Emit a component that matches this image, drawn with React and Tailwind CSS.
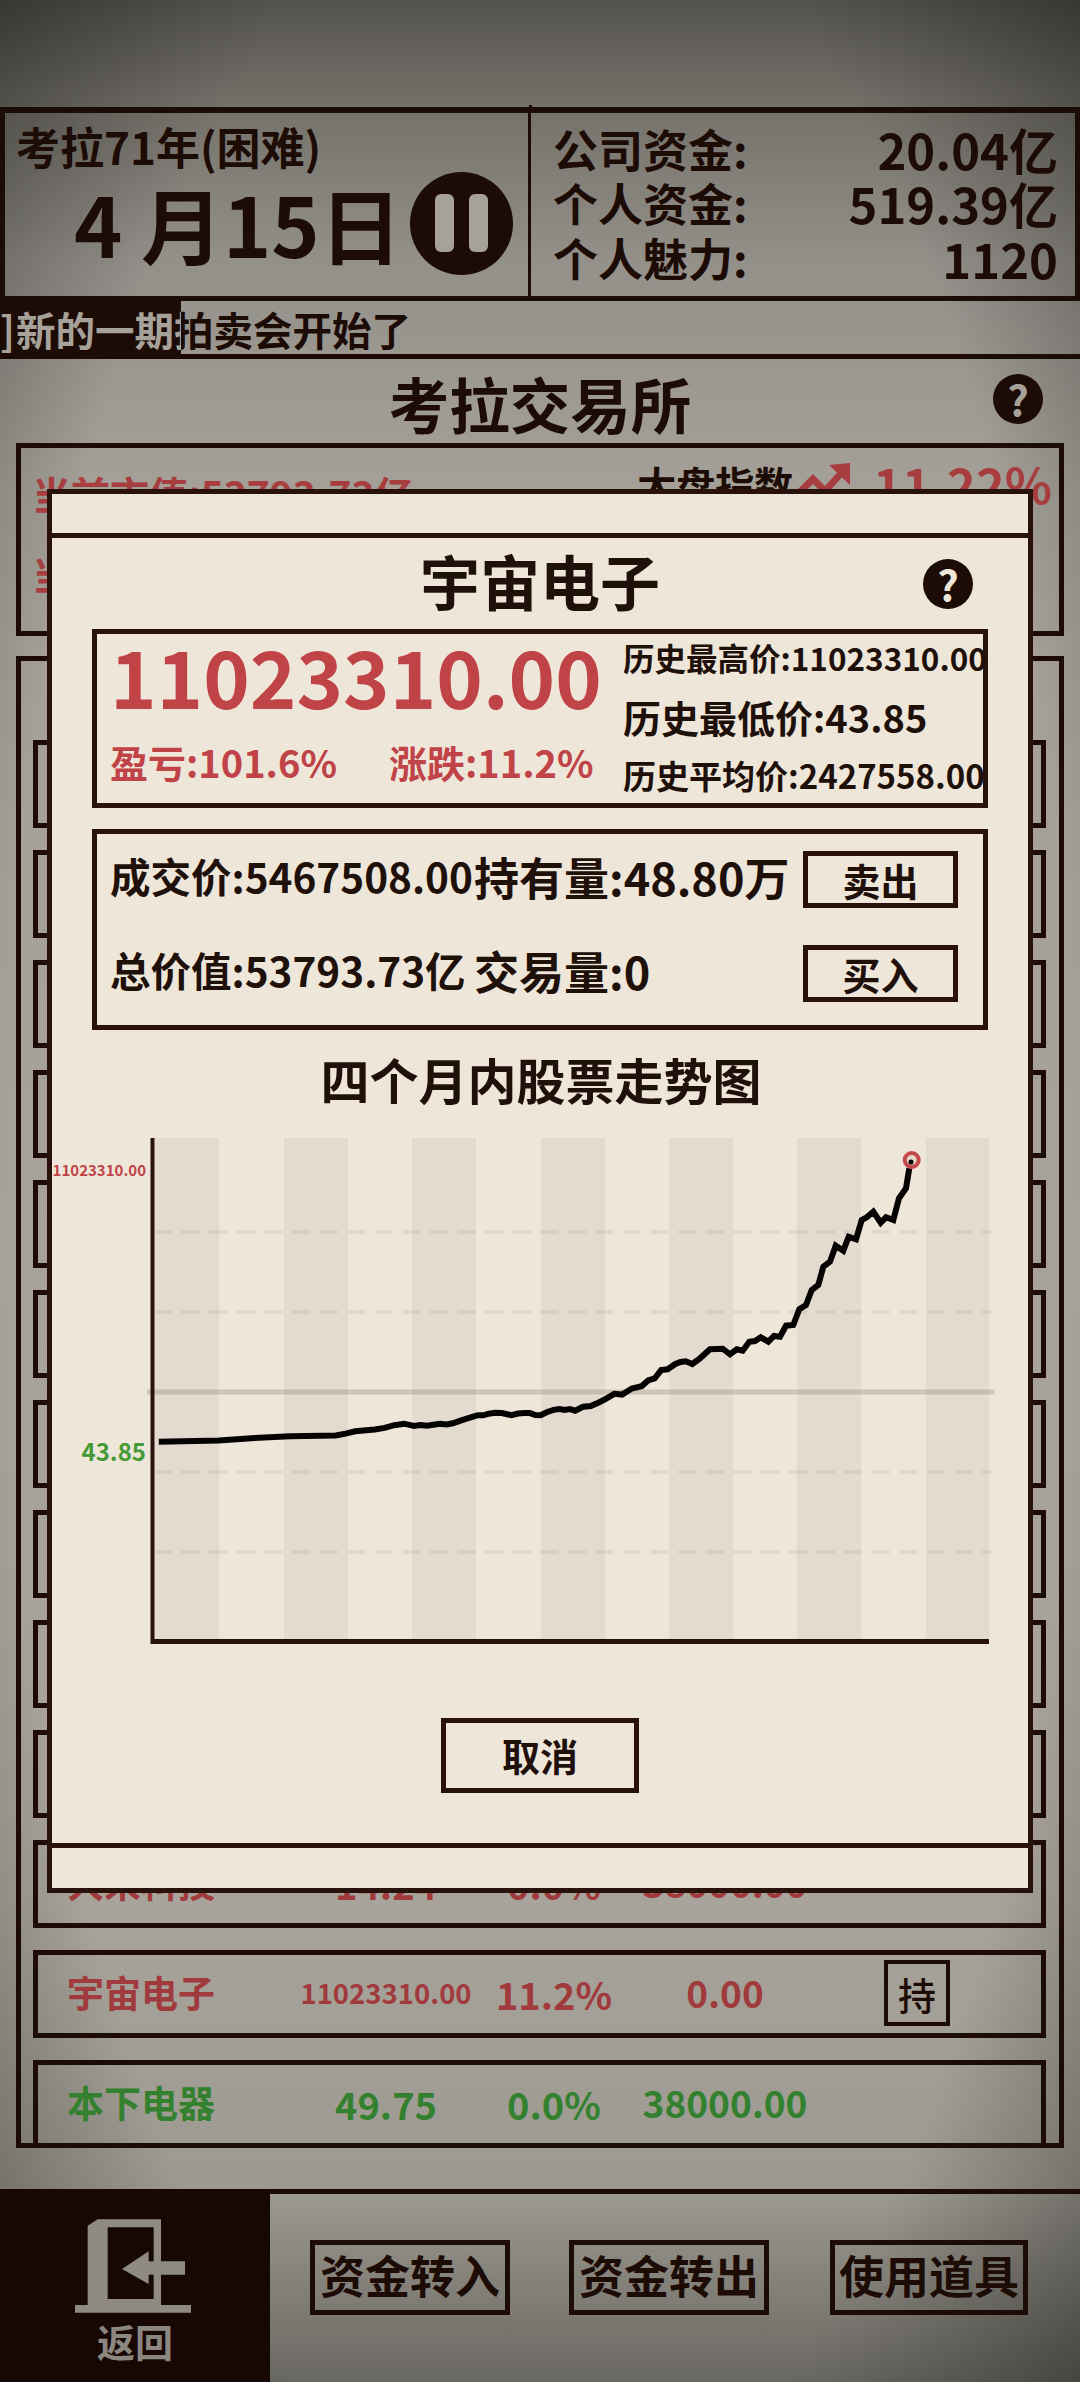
const early = [[198,945],[290,942],[340,936],[400,931],[470,929],[485,924],[500,918],[530,913],[545,909],[560,902],[575,898],[590,904],[620,901],[650,897],[665,888],[680,880],[705,872],[725,870],[740,876],[760,870],[785,876],[805,862],[830,860],[838,864],[850,854],[862,852],[875,842],[885,833],[898,820],[910,822],[925,806],[940,800],[950,785],[960,780],[970,758],[980,756],[992,742],[1008,735],[1018,742]]
const late = [[0,715],[30,688],[68,686],[90,703],[110,688],[128,692],[148,665],[165,663],[182,652],[205,665],[222,648],[240,650],[258,617],[280,615],[298,568],[318,555],[335,510],[355,495],[370,440],[390,425],[407,377],[430,392],[446,350],[468,358],[485,300],[500,292],[520,275],[542,308],[558,292],[580,300],[597,235],[618,205],[628,145]]

// past the flat start the line is a run of tiny steps, so split it and wiggle it a little
const earlyPage = early.map(([x, y]) => [30 + x / 1.537, 1080 + y / 2.613])
const roughEarly = []
earlyPage.forEach(([x, y], i) => {
  const next = earlyPage[i + 1]
  roughEarly.push([x, y])
  if (!next || x < 400) return
  const steps = Math.floor((next[0] - x) / 5)
  for (let s = 1; s < steps; s++) {
    const t = s / steps
    const wiggle = s % 2 === 0 ? 0.6 : -0.6
    roughEarly.push([x + (next[0] - x) * t, y + (next[1] - y) * t + wiggle])
  }
})

const linePoints = [
  ...roughEarly,
  ...late.map(([x, y]) => [700 + x / 3, 1120 + y / 3]),
].map(([x, y]) => `${x.toFixed(1)},${y.toFixed(1)}`).join(' ')

const stripes = [155, 284, 412, 541, 669, 797, 926]
const gridLines = [1232, 1312, 1472, 1552]

const hiddenRows = [740, 850, 960, 1070, 1180, 1290, 1400, 1510, 1620, 1730]

function Help({ mark }) {
  return (
    <div className={`flex h-[50px] w-[50px] items-center justify-center rounded-full bg-[#1d0b05] pb-[2px] text-[42px] leading-none font-bold ${mark}`}>?</div>
  )
}

function StockRow({ name, price, priceSize, change, value, color, held }) {
  return (
    <div className={`flex h-[88px] shrink-0 items-center border-[5px] border-[#1d0b05] pb-[2px] pl-[29px] font-bold ${color}`}>
      <div className="w-[223px] text-[37px] whitespace-nowrap">{name}</div>
      <div className={`w-[192px] text-center whitespace-nowrap ${priceSize}`}>{price}</div>
      <div className="w-[144px] text-center text-[38px]">{change}</div>
      <div className="w-[198px] text-center text-[37px]">{value}</div>
      {held && (
        <div className="ml-[60px] flex h-[66px] w-[66px] items-center justify-center border-[4px] border-[#1d0b05] text-[38px] font-medium text-[#1d0b05]">持</div>
      )}
    </div>
  )
}

function Chart() {
  return (
    <svg width="976" height="520" viewBox="52 1130 976 520" className="block shrink-0">
      {stripes.map((x) => (
        <rect key={x} x={x} y="1138" width={x === 926 ? 63 : 64} height="501" fill="#e4dbd0" />
      ))}
      {gridLines.map((y) => (
        <line key={y} x1="154" x2="992" y1={y} y2={y} stroke="#6f6a5a" strokeOpacity="0.11" strokeWidth="4" strokeDasharray="18 9.6" />
      ))}
      <line x1="147" x2="994" y1="1392" y2="1392" stroke="#7a6a5a" strokeOpacity="0.28" strokeWidth="5" />
      <line x1="152.5" x2="152.5" y1="1138" y2="1644" stroke="#2a120c" strokeWidth="4" />
      <line x1="151" x2="989" y1="1641.5" y2="1641.5" stroke="#2a120c" strokeWidth="5" />
      <polyline points={linePoints} fill="none" stroke="#050302" strokeWidth="6" strokeLinejoin="miter" />
      <circle cx="911.7" cy="1160" r="7" fill="#e6d4c8" stroke="#c4474a" strokeWidth="4" />
      <circle cx="911" cy="1162" r="2.5" fill="#050302" />
      <text x="146" y="1176" textAnchor="end" fontSize="15" fontWeight="700" fill="#c04347">11023310.00</text>
      <text x="146" y="1461" textAnchor="end" fontSize="24" fontWeight="700" fill="#459a37">43.85</text>
    </svg>
  )
}

function Modal() {
  return (
    <div className="absolute top-[489px] left-[47px] flex h-[1404px] w-[986px] flex-col border-[5px] border-[#2a120c] bg-[#efe6da] text-[#20100a]">
      <div className="h-[44px] shrink-0 border-b-[5px] border-[#2a120c]"></div>
      <div className="flex-1 px-[40px]">
        <div className="relative flex h-[91px] items-center justify-center pb-[8px]">
          <div className="text-[60px] leading-none font-bold">宇宙电子</div>
          <div className="absolute top-[21px] right-[15px]"><Help mark="text-[#efe6da]" /></div>
        </div>

        <div className="flex h-[179px] border-[5px] border-[#2a120c] font-bold">
          <div className="w-[526px] shrink-0 mt-[1px] pl-[13px]">
            <div className="text-[79px] leading-[80px] text-[#c04347]">11023310.00</div>
            <div className="mt-[27px] flex gap-[52px] text-[38px] leading-[40px] text-[#c04347]">
              <span>盈亏:101.6%</span>
              <span>涨跌:11.2%</span>
            </div>
          </div>
          <div className="-mt-[6px] whitespace-nowrap">
            <div className="text-[31.5px] leading-[59px]">历史最高价:11023310.00</div>
            <div className="text-[38px] leading-[59px]">历史最低价:43.85</div>
            <div className="text-[33px] leading-[59px]">历史平均价:2427558.00</div>
          </div>
        </div>

        <div className="mt-[21px] flex h-[201px] flex-col gap-[37px] border-[5px] border-[#2a120c] pt-[17px] pl-[13px] font-bold whitespace-nowrap">
          <div className="flex h-[57px] items-center">
            <div className="w-[364px] pb-[6px] text-[40.5px]">成交价:5467508.00</div>
            <div className="w-[329px] pb-[6px] text-[45px]">持有量:48.80万</div>
            <div className="flex h-[57px] w-[155px] items-center justify-center border-[5px] border-[#2a120c] text-[38px]">卖出</div>
          </div>
          <div className="flex h-[57px] items-center">
            <div className="w-[364px] pb-[6px] text-[40.5px]">总价值:53793.73亿</div>
            <div className="w-[329px] pb-[6px] text-[45px]">交易量:0</div>
            <div className="flex h-[57px] w-[155px] items-center justify-center border-[5px] border-[#2a120c] text-[38px]">买入</div>
          </div>
        </div>

        <div className="flex h-[100px] items-center justify-center pb-[2px] pl-[2px] text-[49px] font-bold">四个月内股票走势图</div>
      </div>

      <div className="absolute top-[636px] left-0"><Chart /></div>

      <div className="mx-auto mb-[50px] flex h-[75px] w-[198px] items-center justify-center border-[5px] border-[#2a120c] pb-[2px] text-[38px] font-bold">取消</div>
      <div className="h-[45px] shrink-0 border-t-[5px] border-[#2a120c]"></div>
    </div>
  )
}

export default function App() {
  return (
    <div className="relative flex h-[2382px] w-[1080px] flex-col overflow-hidden bg-[image:radial-gradient(ellipse_62%_70%_at_50%_50%,#00000000_80%,#00000058_108%),linear-gradient(to_bottom,#55534e_0px,#75726b_110px,#93908a_260px,#a4a097_480px,#a8a49b_1900px,#9c9990_2190px,#6a6862_2382px)] font-['Noto_Sans_CJK_SC',sans-serif] text-[#1d0b05]">
      {/* header */}
      <div className="relative mt-[107px] flex h-[194px] shrink-0 border-[5px] border-t-[6px] border-[#1d0b05]">
        <div className="absolute -top-[8px] left-[524px] h-[2px] w-[3px] bg-[#1d0b05]"></div>
        <div className="w-[526px] shrink-0 border-r-[3px] border-[#1d0b05] pt-[3px] pl-[11px]">
          <div className="text-[44px] leading-[60px] font-bold whitespace-nowrap">考拉71年(困难)</div>
          <div className="-mt-[5px] flex items-center">
            <div className="ml-[58px] w-[325px] text-[82px] leading-[104px] font-bold whitespace-nowrap">4 月15日</div>
            <div className="ml-[11px] flex h-[103px] w-[103px] shrink-0 items-center justify-center gap-[15px] rounded-full bg-[#1d0b05]">
              <div className="h-[58px] w-[19px] rounded-[6px] bg-[#a6a299]"></div>
              <div className="h-[58px] w-[19px] rounded-[6px] bg-[#a6a299]"></div>
            </div>
          </div>
        </div>
        <div className="flex-1 pt-[8px] pr-[17px] pl-[22px] font-bold">
          {[['公司资金:', '20.04亿'], ['个人资金:', '519.39亿'], ['个人魅力:', '1120']].map(([label, value]) => (
            <div key={label} className="flex h-[54.5px] items-center justify-between">
              <span className="text-[45px]">{label}</span>
              <span className="text-[49px]">{value}</span>
            </div>
          ))}
        </div>
      </div>

      {/* ticker */}
      <div className="relative h-[58px] shrink-0 border-b-[5px] border-[#1d0b05] text-[39.5px] leading-[56px] font-bold whitespace-nowrap">
        <div className="pl-[16px]">新的一期拍卖会开始了</div>
        <div className="absolute top-0 left-0 h-[58px] w-[181px] overflow-hidden bg-[#1d0b05] text-[#a6a299]">
          <span className="inline-block w-[16px]">]</span>新的一期拍卖会开始了
        </div>
      </div>

      {/* title */}
      <div className="relative flex h-[84px] shrink-0 items-center justify-center pt-[4px]">
        <div className="text-[60.5px] leading-none font-bold">考拉交易所</div>
        <div className="absolute top-[15px] right-[37px]"><Help mark="text-[#a6a299]" /></div>
      </div>

      {/* summary */}
      <div className="mx-[16px] h-[193px] shrink-0 border-[5px] border-[#1d0b05] pl-[11px] font-bold whitespace-nowrap">
        <div className="flex items-start justify-between pr-[7px]">
          <div className="mt-[20px] text-[39px] leading-[50px] text-[#a83d40]">当前市值:53793.73亿</div>
          <div className="mt-[10px] flex items-center">
            <span className="text-[39px] leading-[50px]">大盘指数</span>
            <svg width="56" height="40" viewBox="0 0 56 40" className="ml-[2px]">
              <polyline points="2,32 18,16 30,28 50,6" fill="none" stroke="#a83d40" strokeWidth="7" />
              <polygon points="34,2 55,0 55,22" fill="#a83d40" />
            </svg>
            <span className="ml-[22px] text-[49px] leading-[50px] text-[#a83d40]">11.22%</span>
          </div>
        </div>
        <div className="mt-[30px] text-[39px] leading-[50px] text-[#a83d40]">当前持仓:0</div>
      </div>

      {/* stock list */}
      <div className="mx-[16px] mt-[20px] flex h-[1492px] shrink-0 flex-col gap-[22px] overflow-hidden border-[5px] border-[#1d0b05] pt-[79px] pr-[13px] pl-[12px]">
        {hiddenRows.map((y) => (
          <div key={y} className="h-[88px] shrink-0 border-[5px] border-[#1d0b05]"></div>
        ))}
        <StockRow name="大来科技" price="14.24" priceSize="text-[38px]" change="0.0%" value="38000.00" color="text-[#a03a3d]" />
        <StockRow name="宇宙电子" price="11023310.00" priceSize="text-[27.5px]" change="11.2%" value="0.00" color="text-[#a03a3d]" held />
        <StockRow name="本下电器" price="49.75" priceSize="text-[38px]" change="0.0%" value="38000.00" color="text-[#33812f]" />
      </div>

      {/* bottom bar */}
      <div className="mt-[41px] flex flex-1 border-t-[5px] border-[#1d0b05]">
        <div className="-mt-[5px] flex w-[270px] shrink-0 flex-col items-center bg-[#170804] pt-[30px]">
          <svg width="116" height="94" viewBox="222 116 348 280" className="-ml-[4px]">
            <path fill="#8f8b83" fillRule="evenodd" d="M290 116H480V242H552V282H480V373H570V396H222V373H260V135ZM320 140V355H458V282H443V310L363 265L443 212V242H458V140Z" />
          </svg>
          <div className="mt-[5px] text-[38px] leading-[46px] font-bold text-[#8b8780]">返回</div>
        </div>
        <div className="mt-[46px] flex flex-1 items-start pl-[40px]">
          {['资金转入', '资金转出', '使用道具'].map((label, i) => (
            <div key={label} className={`flex h-[75px] items-center justify-center border-[5px] border-[#1d0b05] pb-[5px] text-[45px] font-bold whitespace-nowrap ${i === 0 ? 'w-[200px]' : i === 1 ? 'ml-[59px] w-[200px]' : 'ml-[61px] w-[198px]'}`}>{label}</div>
          ))}
        </div>
      </div>

      <Modal />
    </div>
  )
}
